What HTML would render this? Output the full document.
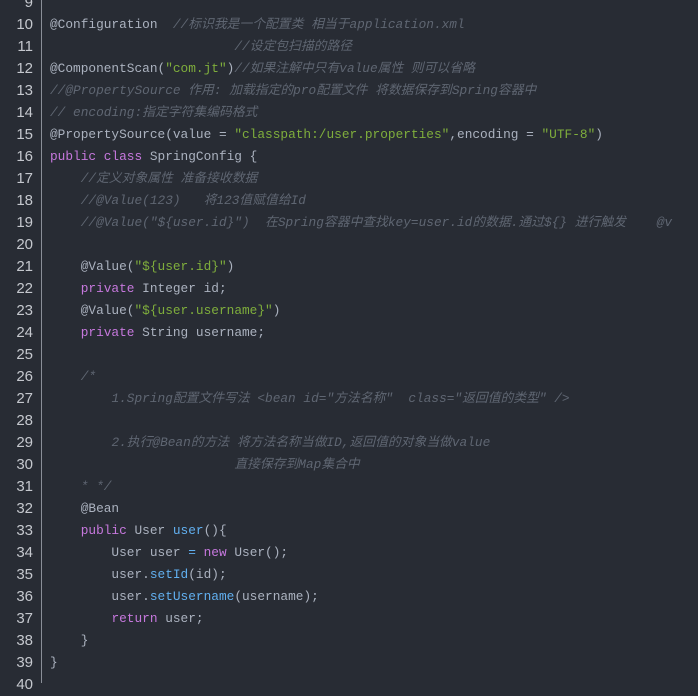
<!DOCTYPE html>
<html><head><meta charset="utf-8"><style>
html,body{margin:0;padding:0;}
body{width:698px;height:683px;background:#282c34;overflow:hidden;position:relative;font-family:"Liberation Mono","Noto Sans CJK SC",monospace;font-size:12.8px;}
.gut{position:absolute;left:41px;top:0;width:1px;height:683px;background:#8a8f98;}
.l{position:absolute;left:0;height:22px;line-height:22px;white-space:pre;width:698px;}
.n{position:absolute;left:0;width:33px;text-align:right;color:#c5c8ce;font-family:"Liberation Sans",sans-serif;font-size:15px;}
.c{position:absolute;left:50px;color:#abb2bf;}
.k{color:#c678dd}.s{color:#7fae3c}.m{color:#5f6672;font-style:italic}.f{color:#61afef}
</style></head><body>
<div class="gut"></div>
<div class="l" style="top:-8px"><span class="n">9</span><span class="c"></span></div>
<div class="l" style="top:14px"><span class="n">10</span><span class="c">@Configuration  <span class="m">//标识我是一个配置类 相当于application.xml</span></span></div>
<div class="l" style="top:36px"><span class="n">11</span><span class="c">                        <span class="m">//设定包扫描的路径</span></span></div>
<div class="l" style="top:58px"><span class="n">12</span><span class="c">@ComponentScan(<span class="s">"com.jt"</span>)<span class="m">//如果注解中只有value属性 则可以省略</span></span></div>
<div class="l" style="top:80px"><span class="n">13</span><span class="c"><span class="m">//@PropertySource 作用: 加载指定的pro配置文件 将数据保存到Spring容器中</span></span></div>
<div class="l" style="top:102px"><span class="n">14</span><span class="c"><span class="m">// encoding:指定字符集编码格式</span></span></div>
<div class="l" style="top:124px"><span class="n">15</span><span class="c">@PropertySource(value = <span class="s">"classpath:/user.properties"</span>,encoding = <span class="s">"UTF-8"</span>)</span></div>
<div class="l" style="top:146px"><span class="n">16</span><span class="c"><span class="k">public class</span> SpringConfig {</span></div>
<div class="l" style="top:168px"><span class="n">17</span><span class="c">    <span class="m">//定义对象属性 准备接收数据</span></span></div>
<div class="l" style="top:190px"><span class="n">18</span><span class="c">    <span class="m">//@Value(123)   将123值赋值给Id</span></span></div>
<div class="l" style="top:212px"><span class="n">19</span><span class="c">    <span class="m">//@Value("${user.id}")  在Spring容器中查找key=user.id的数据.通过${} 进行触发    @v</span></span></div>
<div class="l" style="top:234px"><span class="n">20</span><span class="c"></span></div>
<div class="l" style="top:256px"><span class="n">21</span><span class="c">    @Value(<span class="s">"${user.id}"</span>)</span></div>
<div class="l" style="top:278px"><span class="n">22</span><span class="c">    <span class="k">private</span> Integer id;</span></div>
<div class="l" style="top:300px"><span class="n">23</span><span class="c">    @Value(<span class="s">"${user.username}"</span>)</span></div>
<div class="l" style="top:322px"><span class="n">24</span><span class="c">    <span class="k">private</span> String username;</span></div>
<div class="l" style="top:344px"><span class="n">25</span><span class="c"></span></div>
<div class="l" style="top:366px"><span class="n">26</span><span class="c">    <span class="m">/*</span></span></div>
<div class="l" style="top:388px"><span class="n">27</span><span class="c">        <span class="m">1.Spring配置文件写法 &lt;bean id="方法名称"  class="返回值的类型" /&gt;</span></span></div>
<div class="l" style="top:410px"><span class="n">28</span><span class="c"></span></div>
<div class="l" style="top:432px"><span class="n">29</span><span class="c">        <span class="m">2.执行@Bean的方法 将方法名称当做ID,返回值的对象当做value</span></span></div>
<div class="l" style="top:454px"><span class="n">30</span><span class="c">                        <span class="m">直接保存到Map集合中</span></span></div>
<div class="l" style="top:476px"><span class="n">31</span><span class="c">    <span class="m">* */</span></span></div>
<div class="l" style="top:498px"><span class="n">32</span><span class="c">    @Bean</span></div>
<div class="l" style="top:520px"><span class="n">33</span><span class="c">    <span class="k">public</span> User <span class="f">user</span>(){</span></div>
<div class="l" style="top:542px"><span class="n">34</span><span class="c">        User user <span class="f">=</span> <span class="k">new</span> User();</span></div>
<div class="l" style="top:564px"><span class="n">35</span><span class="c">        user.<span class="f">setId</span>(id);</span></div>
<div class="l" style="top:586px"><span class="n">36</span><span class="c">        user.<span class="f">setUsername</span>(username);</span></div>
<div class="l" style="top:608px"><span class="n">37</span><span class="c">        <span class="k">return</span> user;</span></div>
<div class="l" style="top:630px"><span class="n">38</span><span class="c">    }</span></div>
<div class="l" style="top:652px"><span class="n">39</span><span class="c">}</span></div>
<div class="l" style="top:674px"><span class="n">40</span><span class="c"></span></div>
</body></html>
